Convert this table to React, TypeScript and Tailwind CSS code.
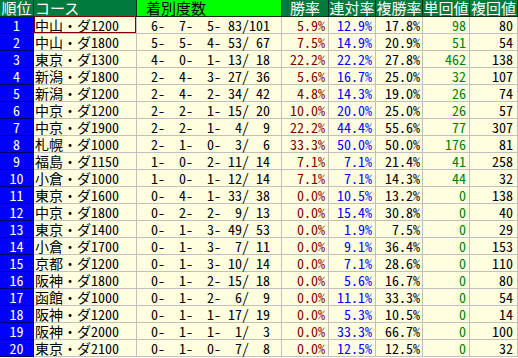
import React from 'react'

type Row = [string, number[], string, string, string, number, number]

const rows: Row[] = [
  ['中山・ダ1200', [6, 7, 5, 83, 101], '5.9%', '12.9%', '17.8%', 98, 80],
  ['中山・ダ1800', [5, 5, 4, 53, 67], '7.5%', '14.9%', '20.9%', 51, 54],
  ['東京・ダ1300', [4, 0, 1, 13, 18], '22.2%', '22.2%', '27.8%', 462, 138],
  ['新潟・ダ1800', [2, 4, 3, 27, 36], '5.6%', '16.7%', '25.0%', 32, 107],
  ['新潟・ダ1200', [2, 4, 2, 34, 42], '4.8%', '14.3%', '19.0%', 26, 74],
  ['中京・ダ1200', [2, 2, 1, 15, 20], '10.0%', '20.0%', '25.0%', 26, 57],
  ['中京・ダ1900', [2, 2, 1, 4, 9], '22.2%', '44.4%', '55.6%', 77, 307],
  ['札幌・ダ1000', [2, 1, 0, 3, 6], '33.3%', '50.0%', '50.0%', 176, 81],
  ['福島・ダ1150', [1, 0, 2, 11, 14], '7.1%', '7.1%', '21.4%', 41, 258],
  ['小倉・ダ1000', [1, 0, 1, 12, 14], '7.1%', '7.1%', '14.3%', 44, 32],
  ['東京・ダ1600', [0, 4, 1, 33, 38], '0.0%', '10.5%', '13.2%', 0, 138],
  ['中京・ダ1800', [0, 2, 2, 9, 13], '0.0%', '15.4%', '30.8%', 0, 40],
  ['東京・ダ1400', [0, 1, 3, 49, 53], '0.0%', '1.9%', '7.5%', 0, 29],
  ['小倉・ダ1700', [0, 1, 3, 7, 11], '0.0%', '9.1%', '36.4%', 0, 153],
  ['京都・ダ1200', [0, 1, 3, 10, 14], '0.0%', '7.1%', '28.6%', 0, 110],
  ['阪神・ダ1800', [0, 1, 2, 15, 18], '0.0%', '5.6%', '16.7%', 0, 80],
  ['函館・ダ1000', [0, 1, 2, 6, 9], '0.0%', '11.1%', '33.3%', 0, 54],
  ['阪神・ダ1200', [0, 1, 1, 17, 19], '0.0%', '5.3%', '10.5%', 0, 14],
  ['阪神・ダ2000', [0, 1, 1, 1, 3], '0.0%', '33.3%', '66.7%', 0, 100],
  ['東京・ダ2100', [0, 1, 0, 7, 8], '0.0%', '12.5%', '12.5%', 0, 32],
]

const pad = (n: number) => String(n).padStart(3, ' ')
const record = (r: number[]) => `${pad(r[0])}-${pad(r[1])}-${pad(r[2])}-${pad(r[3])}/${pad(r[4])}`

// half-width latin forms so digits sit on a 7px grid like the original gothic font
const num = "[font-feature-settings:'hwid']"
const head = 'border-r border-b border-[#00331a] bg-[#007a3d] text-white text-[15px] leading-[16px] text-center'
const cell = 'border-r border-b border-[#c0c0c0] bg-[#ffffe0] text-[14px] leading-[16px] whitespace-pre'

export default function App() {
  return (
    <div className="w-[518px] h-[358px] overflow-hidden bg-white font-['Noto_Sans_CJK_JP',sans-serif]">
      <div className="grid grid-cols-[34px_103px_145px_47px_47px_47px_47px_48px] auto-rows-[17px]">
        <div className={head}>順位</div>
        <div className={`${head} !text-left pl-[1px]`}>コース</div>
        <div className="border-r border-b border-[#00331a] bg-[#00ff00] text-black text-[15px] leading-[16px] pl-[9px]">着別度数</div>
        <div className={head}>勝率</div>
        <div className={head}>連対率</div>
        <div className={head}>複勝率</div>
        <div className={head}>単回値</div>
        <div className={head}>複回値</div>

        {rows.map((r, i) => {
          const m = r[0].match(/^(.*?)(\d+)$/)
          return (
            <React.Fragment key={i}>
              <div className={`border-r border-b border-[#000066] bg-[#0000ff] text-white text-[14px] leading-[16px] text-center ${num}`}>{i + 1}</div>
              <div className={`${cell} pl-[1px] relative`}>
                {m ? m[1] : r[0]}
                <span className={num}>{m ? m[2] : ''}</span>
                {i === 0 && <div className="absolute -top-px left-0 w-[102px] h-[17px] border border-[#800000]" />}
              </div>
              <div className={`${cell} ${num}`}>{record(r[1])}</div>
              <div className={`${cell} ${num} text-right pr-[3px] text-[#800000]`}>{r[2]}</div>
              <div className={`${cell} ${num} text-right pr-[3px] text-[#0000ff]`}>{r[3]}</div>
              <div className={`${cell} ${num} text-right pr-[2px] text-black`}>{r[4]}</div>
              <div className={`${cell} ${num} text-right pr-[3px] text-[#008000]`}>{r[5]}</div>
              <div className={`${cell} ${num} text-right pr-[4px] text-black`}>{r[6]}</div>
            </React.Fragment>
          )
        })}
      </div>
    </div>
  )
}
